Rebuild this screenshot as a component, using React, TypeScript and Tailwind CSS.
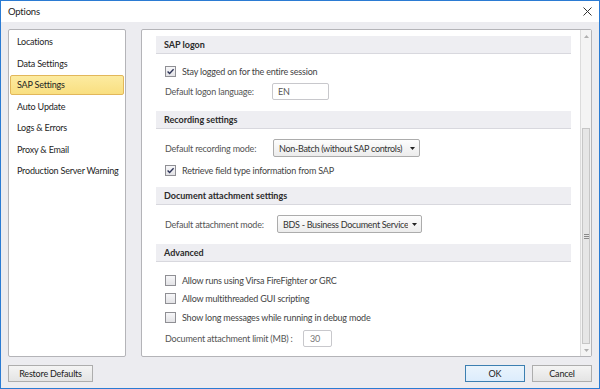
import React from "react";

const nav = [
  "Locations",
  "Data Settings",
  "SAP Settings",
  "Auto Update",
  "Logs & Errors",
  "Proxy & Email",
  "Production Server Warning",
];

function Check({ checked }: { checked?: boolean }) {
  return (
    <span className="w-[11px] h-[11px] shrink-0 border border-[#8f8f94] bg-linear-to-b from-[#f7f7f9] to-[#e3e3e6] flex items-center justify-center">
      {checked && (
        <svg width="9" height="9" viewBox="0 0 9 9">
          <path d="M1.6 4.4 L3.6 6.4 L7.6 2.2" stroke="#2e3458" strokeWidth="1.4" fill="none" />
        </svg>
      )}
    </span>
  );
}

function Header({ title, className = "" }: { title: string; className?: string }) {
  return (
    <div className={`h-[18px] bg-[#eeeef2] border-b border-[#d8d8de] flex items-center pl-2 font-bold tracking-normal text-[#2b2b2b] ${className}`}>
      {title}
    </div>
  );
}

function CheckRow({ label, checked, className = "" }: { label: string; checked?: boolean; className?: string }) {
  return (
    <div className={`h-[18px] flex items-center pl-[9px] gap-[6px] text-[#444] ${className}`}>
      <Check checked={checked} />
      <span>{label}</span>
    </div>
  );
}

function Dropdown({ value, className = "" }: { value: string; className?: string }) {
  return (
    <div className={`h-[18px] border border-[#acacac] rounded-[2px] bg-linear-to-b from-[#fdfdfd] to-[#ececec] flex items-center gap-[4px] pl-[5px] pr-[4px] text-[#333] tracking-[-0.3px] ${className}`}>
      <span className="flex-1 overflow-hidden">{value}</span>
      <svg width="5" height="3" viewBox="0 0 5 3" className="shrink-0">
        <path d="M0 0 H5 L2.5 3 Z" fill="#222" />
      </svg>
    </div>
  );
}

export default function App() {
  return (
    <div className="w-[600px] h-[389px] border border-[#2b7bd3] bg-[#ececf0] flex flex-col font-['Lato','Segoe_UI',sans-serif] text-[9px] tracking-[-0.2px] leading-none text-[#222] whitespace-nowrap overflow-hidden">
      <div className="h-[21px] bg-white flex items-center justify-between pl-[7px] pr-[7px]">
        <span className="text-[9.5px] text-[#222]">Options</span>
        <svg width="9" height="9" viewBox="0 0 9 9">
          <path d="M0.5 0.5 L8.5 8.5 M8.5 0.5 L0.5 8.5" stroke="#333" strokeWidth="1" />
        </svg>
      </div>

      <div className="flex-1 flex flex-col px-[7px] pt-[7px] pb-[6px]">
        <div className="h-[328px] flex gap-[15px]">
          <div className="w-[118px] bg-white border border-[#b4b4b8] rounded-[2px] pt-[1px] px-[1px]">
            {nav.map((item) =>
              item === "SAP Settings" ? (
                <div key={item} className="h-[21.5px] py-[1px]">
                  <div className="h-full border border-[#e2b75a] rounded-[2px] bg-linear-to-b from-[#fceba0] to-[#f9df80] flex items-center pl-[6px] text-[#1e1e1e]">
                    {item}
                  </div>
                </div>
              ) : (
                <div key={item} className="h-[21.5px] flex items-center pl-[7px] text-[#1e1e1e]">
                  {item}
                </div>
              )
            )}
          </div>

          <div className="flex-1 bg-white border border-[#b4b4b8] rounded-[2px] flex">
            <div className="flex-1 pl-[14px] pr-[9px] pt-[6px] flex flex-col">
              <Header title="SAP logon" />
              <CheckRow className="mt-[8px]" checked label="Stay logged on for the entire session" />
              <div className="h-[18px] mt-[2px] flex items-center pl-[9px] text-[#555]">
                <span className="w-[107px]">Default logon language:</span>
                <div className="w-[57px] h-[17px] border border-[#c8c8cc] rounded-[2px] flex items-center pl-[5px] text-[#555]">EN</div>
              </div>

              <Header title="Recording settings" className="mt-[11px]" />
              <div className="h-[18px] mt-[10px] flex items-center pl-[9px] text-[#555]">
                <span className="w-[108px]">Default recording mode:</span>
                <Dropdown className="w-[147px]" value="Non-Batch (without SAP controls)" />
              </div>
              <CheckRow className="mt-[4px]" checked label="Retrieve field type information from SAP" />

              <Header title="Document attachment settings" className="mt-[8px]" />
              <div className="h-[18px] mt-[10px] flex items-center pl-[9px] text-[#555]">
                <span className="w-[112px]">Default attachment mode:</span>
                <Dropdown className="w-[145px]" value="BDS - Business Document Service" />
              </div>

              <Header title="Advanced" className="mt-[11px]" />
              <CheckRow className="mt-[9px]" label="Allow runs using Virsa FireFighter or GRC" />
              <CheckRow label="Allow multithreaded GUI scripting" />
              <CheckRow className="mt-[1px]" label="Show long messages while running in debug mode" />
              <div className="h-[18px] mt-[3px] flex items-center pl-[9px] text-[#555]">
                <span className="w-[138px]">Document attachment limit (MB) :</span>
                <div className="w-[29px] h-[17px] border border-[#c8c8cc] rounded-[2px] flex items-center pl-[6px] text-[#777]">30</div>
              </div>
            </div>

            <div className="w-[11px] border-l border-[#dcdcdc] bg-[#f4f4f4] flex flex-col">
              <div className="h-[12px] flex items-center justify-center">
                <svg width="5" height="3" viewBox="0 0 5 3">
                  <path d="M0 3 L2.5 0 L5 3 Z" fill="#b0b0b0" />
                </svg>
              </div>
              <div className="h-[86px]" />
              <div className="flex-1 mx-[1px] border border-[#c6c6c6] bg-[#e6e6e6] flex items-center justify-center">
                <div className="w-[5px] flex flex-col gap-[1px]">
                  <div className="h-px bg-[#8a8a8a]" />
                  <div className="h-px bg-[#8a8a8a]" />
                  <div className="h-px bg-[#8a8a8a]" />
                </div>
              </div>
              <div className="h-[12px] flex items-center justify-center">
                <svg width="5" height="3" viewBox="0 0 5 3">
                  <path d="M0 0 L2.5 3 L5 0 Z" fill="#b0b0b0" />
                </svg>
              </div>
            </div>
          </div>
        </div>

        <div className="mt-[8px] h-[17px] flex justify-between">
          <button className="w-[85px] h-[17px] border border-[#adadad] bg-linear-to-b from-[#f4f4f4] to-[#e4e4e4] text-[#222]">
            Restore Defaults
          </button>
          <div className="flex gap-[7px]">
            <button className="w-[60px] h-[17px] border border-[#3c7fb1] bg-linear-to-b from-[#eaf4fc] to-[#dcecfc] text-[#222]">
              OK
            </button>
            <button className="w-[60px] h-[17px] border border-[#adadad] bg-linear-to-b from-[#f4f4f4] to-[#e4e4e4] text-[#222]">
              Cancel
            </button>
          </div>
        </div>
      </div>
    </div>
  );
}
